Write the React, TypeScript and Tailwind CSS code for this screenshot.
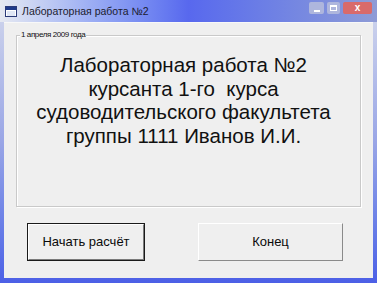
import React from 'react';

const font = { fontFamily: '"Liberation Sans", Arial, sans-serif' };

function WinIcon() {
  return (
    <svg width="12" height="11" viewBox="0 0 12 11">
      <rect x="0.5" y="0.5" width="11" height="10" fill="#ffffff" stroke="#2b3a78" />
      <rect x="1" y="1" width="10" height="3" fill="#1f3a8a" />
      <rect x="2" y="5" width="8" height="5" fill="#dfe6f5" />
    </svg>
  );
}

export default function App() {
  return (
    <div
      className="w-[377px] h-[283px] flex flex-col bg-gradient-to-b from-[#d3d8ec] via-[#9aa6e6] to-[#4c5fe6] px-[4px] pb-[5px]"
      style={font}
    >
      {/* title bar */}
      <div className="h-[22px] flex items-center -mx-[4px] px-[5px] bg-gradient-to-r from-[#e6e9f1] via-[#5868ee] via-50% to-[#8e9bd6]">
        <WinIcon />
        <span className="ml-[5px] text-[10.5px] text-[#1b1b2e] leading-none">Лабораторная работа №2</span>
        <div className="ml-auto flex items-center gap-[3px] -mt-[6px]">
          <div className="w-[15px] h-[12px] rounded-[2px] bg-[#aeb6dd] flex items-end justify-center pb-[2px]">
            <div className="w-[6px] h-[2px] bg-white" />
          </div>
          <div className="w-[13px] h-[12px] rounded-[2px] bg-[#aeb6dd] flex items-center justify-center">
            <div className="w-[7px] h-[6px] border border-white border-t-2" />
          </div>
          <div className="w-[29px] h-[12px] rounded-[2px] bg-[#d96a6a] flex items-center justify-center text-white text-[10px] font-bold leading-none">
            x
          </div>
        </div>
      </div>

      {/* client area */}
      <div className="flex-1 bg-[#efefef] flex flex-col px-[12px] pt-[12px] border-t border-[#f8f8f8]">
        <div className="relative h-[172px] border border-[#c9c9c9] shadow-[inset_1px_1px_0_#ffffff,1px_1px_0_#ffffff]">
          <span className="absolute -top-[6px] left-[3px] bg-[#efefef] px-[1px] text-[8px] tracking-[-0.4px] leading-[10px] text-[#111]">
            1 апреля 2009 года
          </span>
          <div className="pt-[17px] pr-[10px] text-center text-[20.5px] leading-[23.5px] text-[#111]">
            <div>Лабораторная работа №2</div>
            <div>курсанта 1-го&nbsp; курса</div>
            <div>судоводительского факультета</div>
            <div>группы 1111 Иванов И.И.</div>
          </div>
        </div>

        <div className="flex mt-[16px] pl-[11px]">
          <button className="w-[118px] h-[38px] border border-[#1a1a1a] bg-[#efefef] p-0">
            <div className="w-full h-full border-t border-l border-white border-r border-b border-r-[#7a7a7a] border-b-[#7a7a7a] flex items-center justify-center text-[13px] text-[#0a0a0a]">
              Начать расчёт
            </div>
          </button>
          <button className="ml-[53px] w-[145px] h-[38px] bg-[#efefef] border-t border-l border-white border-r border-b border-r-[#8a8a8a] border-b-[#8a8a8a] flex items-center justify-center text-[13px] text-[#0a0a0a]">
            Конец
          </button>
        </div>
      </div>
    </div>
  );
}
